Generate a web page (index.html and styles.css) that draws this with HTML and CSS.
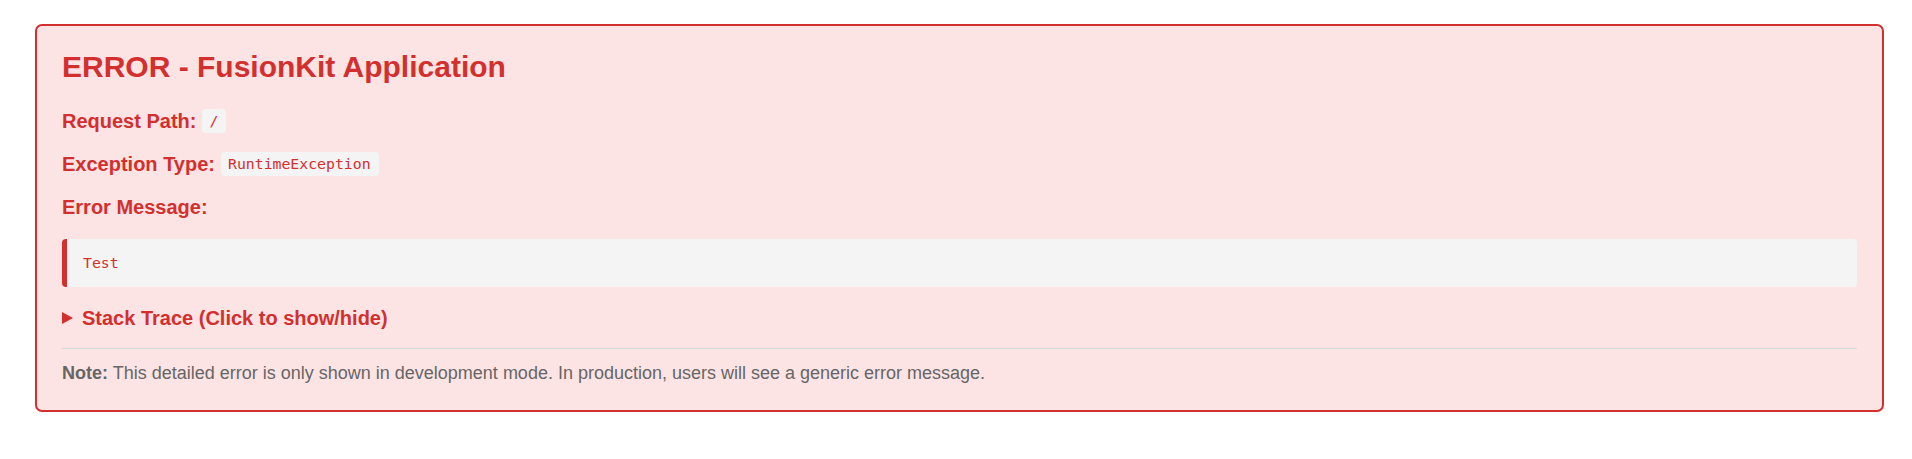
FILE: index.html
```html
<!DOCTYPE html>
<html lang="en">
<head>
<meta charset="utf-8">
<title>ERROR - FusionKit Application</title>
<link rel="stylesheet" href="styles.css">
</head>
<body>
<div class="error-box">
  <h1 class="error-title">ERROR - FusionKit Application</h1>
  <p class="error-row"><strong>Request Path:</strong> <code class="pill">/</code></p>
  <p class="error-row"><strong>Exception Type:</strong> <code class="pill">RuntimeException</code></p>
  <p class="error-row"><strong>Error Message:</strong></p>
  <div class="message-block">Test</div>
  <details class="trace">
    <summary class="trace-summary"><svg class="trace-arrow" width="11" height="12" viewBox="0 0 11 12"><path d="M0 0 L11 6 L0 12 Z" fill="currentColor"/></svg>Stack Trace (Click to show/hide)</summary>
  </details>
  <hr class="divider">
  <p class="note"><strong>Note:</strong> This detailed error is only shown in development mode. In production, users will see a generic error message.</p>
</div>
</body>
</html>
```
FILE: styles.css
```css
html, body {
  margin: 0;
  background: #ffffff;
}
body {
  padding: 24px 28px 0 35px;
  font-family: "Liberation Sans", Arial, sans-serif;
}
.error-box {
  background: #fde4e4;
  border: 2px solid #d32f2f;
  border-radius: 7px;
  padding: 23px 25px 25px 25px;
  color: #d32f2f;
}
.error-title {
  margin: 0 0 24px 0;
  font-size: 30px;
  line-height: 36px;
  font-weight: bold;
}
.error-row {
  display: flex;
  align-items: center;
  gap: 6px;
  margin: 0 0 19px 0;
  font-size: 20px;
  line-height: 24px;
  height: 24px;
}
.error-row strong {
  font-weight: bold;
}
.pill {
  display: block;
  font-family: "DejaVu Sans Mono", "Liberation Mono", monospace;
  font-size: 14.8px;
  line-height: 18px;
  padding: 3px 8px 3px 7px;
  background: #f4f4f4;
  border-radius: 4px;
  color: #d32f2f;
}
.message-block {
  margin: 20px 0 19px 0;
  background: #f4f4f4;
  border-left: 5px solid #d32f2f;
  border-radius: 4px;
  padding: 15px 16px;
  font-family: "DejaVu Sans Mono", "Liberation Mono", monospace;
  font-size: 14.8px;
  line-height: 18px;
  color: #d32f2f;
}
.trace {
  margin: 0;
}
.trace-summary {
  list-style: none;
  display: flex;
  align-items: center;
  font-size: 20px;
  line-height: 24px;
  font-weight: bold;
  cursor: pointer;
}
.trace-summary::-webkit-details-marker {
  display: none;
}
.trace-arrow {
  margin-right: 9px;
  flex: none;
}
.divider {
  margin: 18px 0 12px 0;
  border: 0;
  border-top: 1px solid #d6d9dc;
  height: 0;
}
.note {
  margin: 0;
  font-size: 18px;
  line-height: 24px;
  color: #666666;
}
.note strong {
  font-weight: bold;
}
```
